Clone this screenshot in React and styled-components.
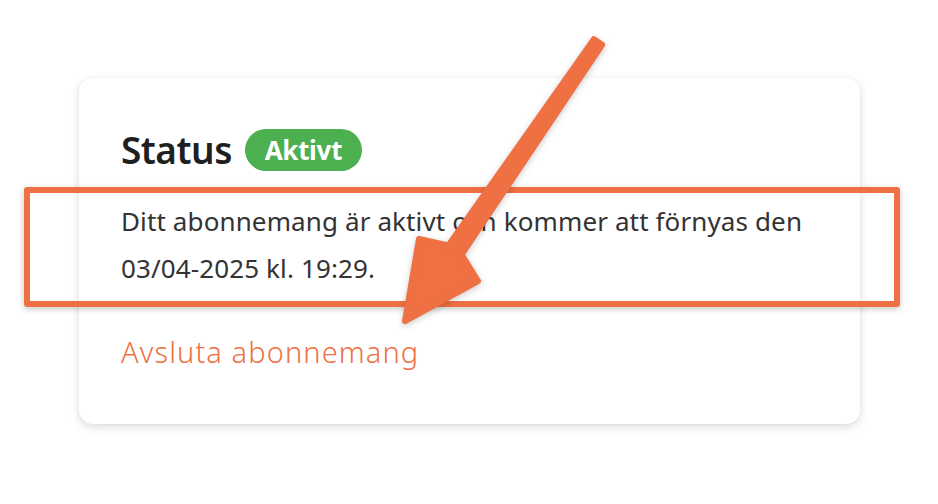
import React from "react";
import styled, { createGlobalStyle } from "styled-components";

const GlobalStyle = createGlobalStyle`
  html, body {
    margin: 0;
    padding: 0;
    background: #ffffff;
  }
  body {
    font-family: "Noto Sans", "Open Sans", sans-serif;
  }
`;

const ORANGE = "#ee7043";

function App() {
  return (
    <Page>
      <GlobalStyle />
      <Card>
        <Header>
          <Title>Status</Title>
          <Badge>Aktivt</Badge>
        </Header>
        <Info>
          Ditt abonnemang är aktivt och kommer att förnyas den
          <br />
          03/04-2025 kl. 19:29.
        </Info>
        <CancelLink href="#">Avsluta abonnemang</CancelLink>
      </Card>

      {/* annotation overlay */}
      <Highlight />
      <Arrow viewBox="0 0 938 504" width="938" height="504">
        <polygon
          points="593.9,39.2 448.4,245.4 419,239 405,321 478,281 461.6,254.6 602.1,44.8"
          fill={ORANGE}
          stroke={ORANGE}
          strokeWidth="6"
          strokeLinejoin="round"
        />
      </Arrow>
    </Page>
  );
}

export default App;

const Page = styled.div`
  position: relative;
  width: 938px;
  height: 504px;
  overflow: hidden;
  padding: 78px 0 0 79px;
  box-sizing: border-box;
`;

const Card = styled.div`
  width: 781px;
  height: 346px;
  box-sizing: border-box;
  padding: 51px 42px 0 42px;
  background: #fff;
  border-radius: 14px;
  box-shadow: 0 3px 10px rgba(0, 0, 0, 0.14), 0 0 2px rgba(0, 0, 0, 0.05);
  display: flex;
  flex-direction: column;
`;

const Header = styled.div`
  display: flex;
  align-items: center;
  gap: 13px;
  height: 42px;
`;

const Title = styled.h2`
  margin: 0;
  font-size: 37px;
  font-weight: 600;
  color: #1f1f1f;
  line-height: 42px;
  letter-spacing: -0.5px;
`;

const Badge = styled.span`
  display: inline-flex;
  align-items: center;
  justify-content: center;
  height: 42px;
  width: 117px;
  box-sizing: border-box;
  border-radius: 21px;
  background: #4caf50;
  color: #fff;
  font-size: 26px;
  font-weight: 700;
  letter-spacing: -0.3px;
`;

const Info = styled.p`
  margin: 27px 0 0 0;
  font-size: 26px;
  line-height: 47px;
  color: #333;
  letter-spacing: 0.12px;
`;

const CancelLink = styled.a`
  align-self: flex-start;
  margin-top: 36px;
  font-size: 29px;
  font-weight: 300;
  line-height: 47px;
  letter-spacing: 1.1px;
  color: ${ORANGE};
  text-decoration: none;
`;

const Highlight = styled.div`
  position: absolute;
  left: 24px;
  top: 187px;
  width: 876px;
  height: 120px;
  box-sizing: border-box;
  border: 6px solid ${ORANGE};
  border-radius: 3px;
  box-shadow: 0 2px 6px rgba(0, 0, 0, 0.22);
  pointer-events: none;
`;

const Arrow = styled.svg`
  position: absolute;
  left: 0;
  top: 0;
  pointer-events: none;
  filter: drop-shadow(0 2px 3px rgba(0, 0, 0, 0.2));
`;
